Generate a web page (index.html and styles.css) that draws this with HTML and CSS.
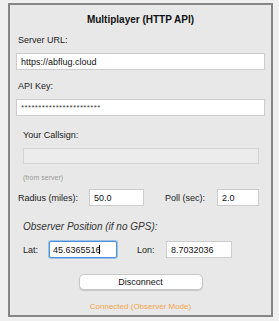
FILE: index.html
```html
<!DOCTYPE html>
<html lang="en">

<head>
    <meta charset="UTF-8">
    <title>Multiplayer (HTTP API)</title>
    <link rel="stylesheet" href="styles.css">
</head>

<body>
    <div id="panel">
        <div class="title">Multiplayer (HTTP API)</div>

        <div class="label first">Server URL:</div>
        <input class="field wide" type="text" value="https://abflug.cloud" readonly>

        <div class="label">API Key:</div>
        <input class="field wide key" type="text" value="***********************" readonly>

        <div id="callsign">
            <div class="label">Your Callsign:</div>
            <input class="field wide" type="text" value="" disabled>
            <div class="hint">(from server)</div>
        </div>

        <div class="row" id="radius-row">
            <span class="radius-label">Radius (miles):</span>
            <input class="field radius" type="text" value="50.0" readonly>
            <span class="poll-label">Poll (sec):</span>
            <input class="field poll" type="text" value="2.0" readonly>
        </div>

        <div id="observer">
            <div class="observer-title">Observer Position (if no GPS):</div>
            <div class="row" id="pos-row">
                <span class="lat-label">Lat:</span>
                <span class="caret-wrap">
                    <input class="field lat focused" type="text" value="45.6365516" readonly>
                    <span class="caret"></span>
                </span>
                <span class="lon-label">Lon:</span>
                <input class="field lon" type="text" value="8.7032036" readonly>
            </div>
        </div>

        <div id="btn-wrap">
            <button>Disconnect</button>
        </div>

        <div id="status">Connected (Observer Mode)</div>
    </div>
</body>

</html>
```

FILE: styles.css
```css
* {
    margin: 0;
    padding: 0;
    box-sizing: border-box;
}

body {
    background-color: #efefef;
    font-family: "Liberation Sans", Arial, sans-serif;
    font-size: 9px;
    color: #222;
}

#panel {
    width: 265px;
    height: 314px;
    margin: 3px 0 0 8px;
    padding: 9px 6px 0 6px;
    border: 2px solid #858585;
    background-color: #e8e8e8;
}

.title {
    font-size: 10px;
    font-weight: bold;
    line-height: 12px;
    text-align: center;
    color: #111;
}

.label {
    line-height: 12px;
    margin-top: 10px;
    padding-left: 2px;
}

.label.first {
    margin-top: 8px;
}

.field {
    display: block;
    height: 17px;
    margin-top: 7px;
    padding: 0 4px;
    border: 1px solid #cdcdcd;
    background-color: #fff;
    font-family: "Liberation Sans", Arial, sans-serif;
    font-size: 9px;
    color: #111;
    outline: none;
}

.wide {
    width: 249px;
}

.key {
    font-size: 8px;
    letter-spacing: .35px;
    color: #444;
}

/* inset group, like a sub panel */
#callsign {
    padding: 0 6px 0 7px;
    margin-top: 13px;
}

#callsign .label {
    padding-left: 0;
    margin-top: 0;
}

#callsign .field {
    width: 236px;
    height: 16px;
    background-color: #ececec;
    border-color: #d3d3d3;
}

.hint {
    font-size: 7px;
    line-height: 9px;
    color: #9a9a9a;
    margin-top: 9px;
}

.row {
    display: flex;
    align-items: center;
}

.row .field {
    margin-top: 0;
}

#radius-row {
    margin-top: 7px;
    padding-left: 2px;
}

.radius-label {
    width: 71px;
}

.radius {
    width: 55px;
}

.poll-label {
    width: 52px;
    margin-left: 21px;
}

.poll {
    width: 42px;
}

#observer {
    padding-left: 7px;
}

.observer-title {
    font-size: 10px;
    font-style: italic;
    line-height: 12px;
    margin-top: 15px;
    color: #333;
}

#pos-row {
    margin-top: 8px;
}

.lat-label {
    width: 26px;
}

.caret-wrap {
    position: relative;
}

.lat {
    width: 68px;
    border: 1px solid #4f8fd6;
    border-radius: 2px;
    box-shadow: 0 0 0 1px #9cc3ec;
    padding-left: 3px;
}

.caret {
    position: absolute;
    left: 50px;
    top: 4px;
    width: 1px;
    height: 9px;
    background-color: #000;
}

.lon-label {
    width: 29px;
    margin-left: 20px;
}

.lon {
    width: 66px;
}

#btn-wrap {
    margin-top: 16px;
    text-align: center;
}

#btn-wrap button {
    width: 124px;
    height: 16px;
    border: 1px solid #c8c8c8;
    border-radius: 5px;
    background-color: #fff;
    box-shadow: 0 1px 1px rgba(0, 0, 0, .15);
    font-family: "Liberation Sans", Arial, sans-serif;
    font-size: 9px;
    color: #111;
}

#status {
    margin-top: 12px;
    font-size: 8px;
    line-height: 10px;
    text-align: center;
    color: #f5a449;
}
```
